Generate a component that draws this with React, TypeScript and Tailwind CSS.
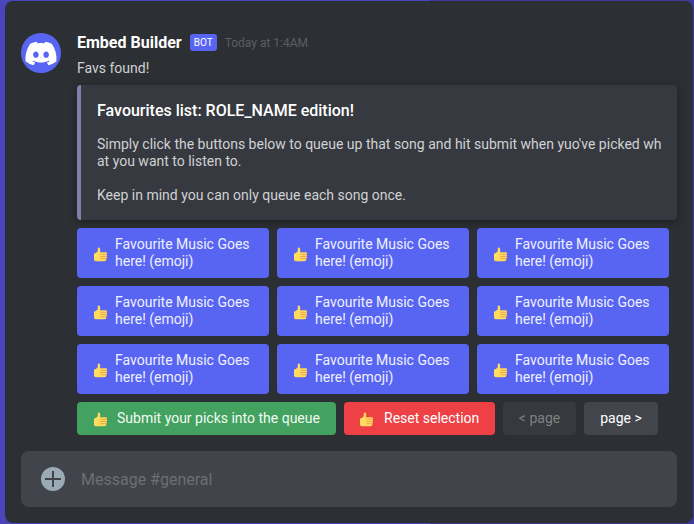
import React from "react";
import { FaDiscord } from "react-icons/fa";

function ThumbsUp() {
  return (
    <svg width="14" height="15" viewBox="0 0 14 15" className="shrink-0">
      <path
        d="M1 7.2C1 6.4 1.6 6 2.4 5.9 3.8 5.5 4.8 4.6 4.8 3.2V1.3C4.9.1 6.7.1 7 1.3c.3 1.3.3 2.6 0 3.9l5.8.1c1.2 0 1.5 1.5.8 2.1.6.6.5 1.6-.1 2.1.5.6.4 1.6-.2 2.1.3 1.5-.5 2.6-1.9 2.6H3.6C2 14.2 1 13.6 1 12.4z"
        fill="#ffdb5e"
      />
      <path
        d="M7.9 7.3h5.3M7.7 9.5h5.4M7.9 11.7h4.9"
        stroke="#ee9547"
        strokeWidth="0.8"
        strokeLinecap="round"
      />
    </svg>
  );
}

function SongButton() {
  return (
    <button className="flex h-[50px] w-48 items-center gap-2 rounded-[4px] bg-[#5865f2] pl-4 text-left text-sm leading-[17px] text-[#eef0ff]">
      <span className="mt-[2px]">
        <ThumbsUp />
      </span>
      <span>
        Favourite Music Goes
        <br />
        here! (emoji)
      </span>
    </button>
  );
}

export default function App() {
  return (
    <div className="h-[524px] w-[694px] overflow-hidden bg-[linear-gradient(90deg,#4b45bd_430px,#3d3899_430px)] pt-px pr-px pb-px pl-[5px] font-['Roboto',sans-serif]">
      <main className="flex h-[522px] flex-col rounded-lg bg-[#2c2f33] px-4 pt-8">
        <article className="flex gap-4">
          <div className="flex size-10 shrink-0 items-center justify-center rounded-full bg-[#5865f2]">
            <FaDiscord className="h-[27px] w-[34px] text-white" />
          </div>
          <div className="w-[600px] shrink-0">
            <header className="flex h-[19px] items-center">
              <h1 className="text-base leading-[19px] font-bold text-white">Embed Builder</h1>
              <span className="ml-2 flex h-[17px] w-[27px] items-center justify-center rounded-[3px] bg-[#5865f2] text-[10px] text-white">
                BOT
              </span>
              <time className="ml-2 text-xs text-[#5c5e62]">Today at 1:4AM</time>
            </header>
            <p className="mt-2 text-sm leading-[17px] text-[#d0d1d3]">Favs found!</p>
            <section className="mt-2 h-[135px] rounded-[4px] border-l-4 border-[#8280a9] bg-[#36393f] px-4 pt-4 shadow-[0_2px_8px_rgba(0,0,0,0.35)]">
              <h2 className="text-base leading-[19px] font-medium text-white">
                Favourites list: ROLE_NAME edition!
              </h2>
              <p className="mt-4 text-sm leading-[17px] whitespace-nowrap text-[#d0d1d3]">
                Simply click the buttons below to queue up that song and hit submit when yuo've picked wh
                <br />
                at you want to listen to.
                <br />
                <br />
                Keep in mind you can only queue each song once.
              </p>
            </section>
            <div className="mt-2 flex flex-wrap gap-2">
              {Array.from({ length: 9 }, (_, i) => (
                <SongButton key={i} />
              ))}
            </div>
            <div className="mt-2 flex h-[33px] gap-2 text-sm leading-[17px]">
              <button className="flex w-[259px] items-center gap-2.5 rounded-[4px] bg-[#43a25f] pb-px pl-4 text-[#f2faf4]">
                <span className="mt-[3px]">
                  <ThumbsUp />
                </span>
                Submit your picks into the queue
              </button>
              <button className="flex w-[151px] items-center gap-2.5 rounded-[4px] bg-[#ed4145] pb-px pl-[15px] text-white">
                <span className="mt-[3px]">
                  <ThumbsUp />
                </span>
                <span className="pl-px">Reset selection</span>
              </button>
              <button className="w-[73px] rounded-[4px] bg-[#36393e] pb-px text-[#7f8183]">&lt; page</button>
              <button className="w-[74px] rounded-[4px] bg-[#42454b] pb-px text-white">page &gt;</button>
            </div>
          </div>
        </article>
        <div className="mt-4 flex h-14 w-[656px] items-center gap-4 rounded-lg bg-[#41444b] pl-5">
          <svg width="24" height="24" viewBox="0 0 24 24">
            <circle cx="12" cy="12" r="12" fill="#9aabb5" />
            <path d="M12 4v16M4 12h16" stroke="#41444b" strokeWidth="2" />
          </svg>
          <span className="pt-px text-base leading-[19px] text-[#6c6f74]">Message #general</span>
        </div>
      </main>
    </div>
  );
}
